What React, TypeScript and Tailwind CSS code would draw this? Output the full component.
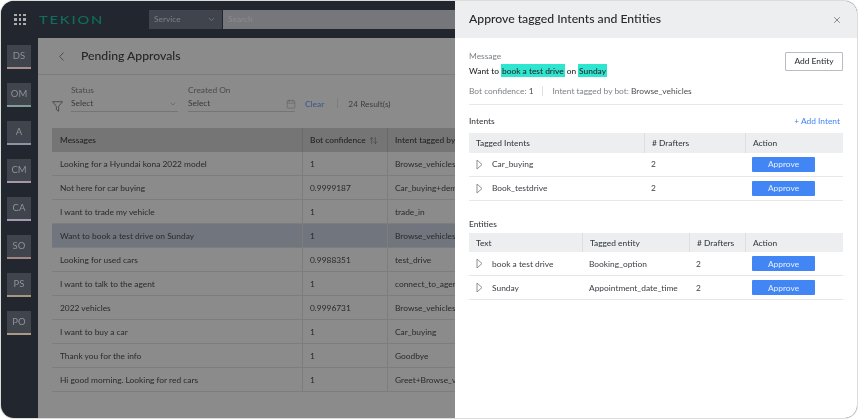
import React from "react";
import { ChevronDown, ChevronLeft, Calendar, X, ArrowUpDown } from "lucide-react";

const rail = [
  ["DS", "bg-[#a98e8c]"],
  ["OM", "bg-[#7f9c97]"],
  ["A", "bg-[#8b93a5]"],
  ["CM", "bg-[#a596a8]"],
  ["CA", "bg-[#a598b0]"],
  ["SO", "bg-[#a3857f]"],
  ["PS", "bg-[#a8977f]"],
  ["PO", "bg-[#ab9a83]"],
];

const rows = [
  ["Looking for a Hyundai kona 2022 model", "1", "Browse_vehicles"],
  ["Not here for car buying", "0.9999187", "Car_buying+demo"],
  ["I want to trade my vehicle", "1", "trade_in"],
  ["Want to book a test drive on Sunday", "1", "Browse_vehicles"],
  ["Looking for used cars", "0.9988351", "test_drive"],
  ["I want to talk to the agent", "1", "connect_to_agent"],
  ["2022 vehicles", "0.9996731", "Browse_vehicles"],
  ["I want to buy a car", "1", "Car_buying"],
  ["Thank you for the info", "1", "Goodbye"],
  ["Hi good morning. Looking for red cars", "1", "Greet+Browse_vehicles"],
];

function Tri() {
  return (
    <svg width="7" height="11" viewBox="0 0 7 11" fill="none" className="shrink-0">
      <path d="M1 1 L6 5.5 L1 10 Z" stroke="#8b8f96" strokeWidth="1" strokeLinejoin="round" />
    </svg>
  );
}

function FunnelIcon() {
  return (
    <svg width="11" height="11" viewBox="0 0 11 11" fill="none">
      <path d="M0.5 0.7 H10.5 L6.6 5.4 V10.3 L4.4 8.6 V5.4 Z" stroke="#3f3f3f" strokeWidth="0.8" strokeLinejoin="round" />
    </svg>
  );
}

function Approve() {
  return (
    <div className="flex h-[15px] w-[63px] items-center justify-center rounded-[1px] bg-[#4285f4] text-[#e8f0fe]">
      Approve
    </div>
  );
}

export default function App() {
  return (
    <div
      className="h-[420px] w-[859px] overflow-hidden bg-white p-[1px] text-[8.4px] leading-none blur-[0.35px]"
      style={{ fontFamily: 'Lato, "Liberation Sans", sans-serif' }}
    >
      <div className="relative flex h-[417px] w-[856px] flex-col overflow-hidden rounded-[13px] bg-[#22262f] shadow-[0_0_0_1px_#dcdcdc]">
        <div className="flex h-[37px] shrink-0 items-center bg-[#22262f] pl-[13px]">
          <div className="grid w-[12px] grid-cols-3 gap-[2px]">
            {Array.from({ length: 9 }).map((_, i) => (
              <span key={i} className="h-[2.5px] w-[2.5px] bg-[#a9abae]" />
            ))}
          </div>
          <div className="ml-[13px] w-[72px] origin-left scale-x-[1.22] whitespace-nowrap text-[12px] font-medium tracking-[1.5px] text-[#0f6f5c]">TEKION</div>
          <div className="ml-[38px] flex h-[19px] w-[73px] items-center justify-between bg-[#3f444d] pl-[5px] pr-[6px] text-[#7d8187]">
            <span>Service</span>
            <ChevronDown size={9} />
          </div>
          <div className="ml-[1px] flex h-[19px] w-[234px] items-center bg-[#75777a] pl-[5px] text-[#8b8c8e]">Search</div>
        </div>
        <div className="flex min-h-0 flex-1">
          <div className="flex w-[37px] shrink-0 flex-col items-center gap-[14px] pr-[1px] pt-[7px]">
            {rail.map(([t, c]) => (
              <div key={t} className="flex h-[24px] w-[24px] flex-col bg-[#3f444d] text-[#8f9297]">
                <div className="flex flex-1 items-center justify-center text-[9.5px]">{t}</div>
                <div className={`h-[2px] ${c}`} />
              </div>
            ))}
          </div>
          <div className="min-w-0 flex-1 bg-[#8b8b8b] text-[#2e2e2e]">
            <div className="flex h-[37px] items-center border-b border-[#7d7d7d] pl-[16px]">
              <ChevronLeft size={15} className="text-[#3a3a3a]" strokeWidth={1.2} />
              <div className="ml-[12px] text-[12.2px] font-medium text-[#262626]">Pending Approvals</div>
            </div>
            <div className="flex h-[53px] pl-[14px] text-[#3a3a3a]">
              <div className="flex w-[19px] items-start pt-[26px]">
                <FunnelIcon />
              </div>
              <div className="mt-[11px] w-[107px]">
                <div className="mb-[5px] text-[#4a4a4a]">Status</div>
                <div className="flex h-[13px] items-start justify-between border-b border-[#757575]">
                  <span>Select</span>
                  <ChevronDown size={8} className="mr-[1px] mt-[1px] text-[#5a5a5a]" />
                </div>
              </div>
              <div className="ml-[10px] mt-[11px] w-[107px]">
                <div className="mb-[5px] text-[#4a4a4a]">Created On</div>
                <div className="flex h-[13px] items-start justify-between border-b border-[#757575]">
                  <span>Select</span>
                  <Calendar size={10} className="mr-[-1px] text-[#5a5a5a]" strokeWidth={1.2} />
                </div>
              </div>
              <div className="ml-[10px] mt-[25px] font-medium text-[#3b5b8c]">Clear</div>
              <div className="ml-[13px] mt-[23px] h-[10px] w-px bg-[#7d7d7d]" />
              <div className="ml-[10px] mt-[25px] text-[#3f3f3f]">24 Result(s)</div>
            </div>
            <div className="ml-[14px]">
              <div className="grid h-[24px] grid-cols-[250px_85px_1fr] bg-[#757575] font-medium text-[#242424]">
                <div className="flex items-center pl-[8px] pt-[1px]">Messages</div>
                <div className="flex items-center justify-between whitespace-nowrap border-l border-[#6a6a6a] pl-[7px] pr-[9px] pt-[1px]">
                  Bot confidence <ArrowUpDown size={9} className="text-[#4a4a4a]" />
                </div>
                <div className="flex items-center whitespace-nowrap border-l border-[#6a6a6a] pl-[7px] pt-[1px]">Intent tagged by bot</div>
              </div>
              {rows.map((r) => (
                <div
                  key={r[0]}
                  className={`grid h-[24px] grid-cols-[250px_85px_1fr] border-b border-[#7d7d7d] text-[#2a2a2a] ${r[0].startsWith("Want") ? "bg-[#70757e]" : ""}`}
                >
                  <div className="flex items-center pl-[8px] pt-[1px]">{r[0]}</div>
                  <div className="flex items-center border-l border-[#7d7d7d] pl-[7px] pt-[1px]">{r[1]}</div>
                  <div className="flex items-center whitespace-nowrap border-l border-[#7d7d7d] pl-[7px] pt-[1px]">{r[2]}</div>
                </div>
              ))}
            </div>
          </div>
        </div>

        <div className="absolute bottom-0 right-0 top-0 flex w-[402px] flex-col bg-white text-[#3b3e44]">
          <div className="flex h-[37px] shrink-0 items-center justify-between bg-[#eceef0] pl-[14px] pr-[15px]">
            <div className="text-[12.2px] font-medium text-[#26282c]">Approve tagged Intents and Entities</div>
            <X size={10} className="text-[#74787e]" />
          </div>
          <div className="px-[14px]">
            <div className="flex justify-between border-b border-[#e6e7e9] pb-[8px] pt-[14px]">
              <div>
                <div className="text-[#7d8187]">Message</div>
                <div className="mt-[4px] flex h-[13px] items-center font-medium text-[#26282c]">
                  Want to
                  <span className="mx-[2px] flex h-[13px] items-center bg-[#2ee6cf] px-[1px]">book a test drive</span>
                  on
                  <span className="ml-[2px] flex h-[13px] items-center bg-[#2ee6cf] px-[1px]">Sunday</span>
                </div>
                <div className="mt-[9px] flex items-center text-[#7d8187]">
                  Bot confidence:&nbsp;<span className="text-[#4a4d52]">1</span>
                  <span className="mx-[9px] h-[10px] w-px bg-[#dfe0e2]" />
                  Intent tagged by bot:&nbsp;<span className="text-[#4a4d52]">Browse_vehicles</span>
                </div>
              </div>
              <div className="flex h-[19px] w-[58px] items-center justify-center rounded-[1px] border border-[#b9bcc2] font-medium text-[#34373c]">
                Add Entity
              </div>
            </div>

            <div className="mt-[12px] flex items-center justify-between">
              <div className="font-medium text-[#3b3e44]">Intents</div>
              <div className="mr-[3px] text-[#4285f4]">+ Add Intent</div>
            </div>
            <div className="mt-[7px]">
              <div className="grid h-[20px] grid-cols-[175px_101px_1fr] bg-[#eceef0] font-medium text-[#3b3e44]">
                <div className="flex items-center pl-[7px]">Tagged Intents</div>
                <div className="flex items-center border-l border-[#dcdee1] pl-[7px]"># Drafters</div>
                <div className="flex items-center border-l border-[#dcdee1] pl-[7px]">Action</div>
              </div>
              {[["Car_buying", "2"], ["Book_testdrive", "2"]].map((r) => (
                <div key={r[0]} className="grid h-[24px] grid-cols-[175px_101px_1fr] border-b border-[#e6e7e9]">
                  <div className="flex items-center gap-[9px] pl-[7px]"><Tri />{r[0]}</div>
                  <div className="flex items-center pl-[7px]">{r[1]}</div>
                  <div className="flex items-center pl-[7px]"><Approve /></div>
                </div>
              ))}
            </div>

            <div className="mt-[19px] font-medium text-[#3b3e44]">Entities</div>
            <div className="mt-[5px]">
              <div className="grid h-[19px] grid-cols-[113px_107px_56px_1fr] bg-[#eceef0] font-medium text-[#3b3e44]">
                <div className="flex items-center pl-[7px]">Text</div>
                <div className="flex items-center border-l border-[#dcdee1] pl-[7px]">Tagged entity</div>
                <div className="flex items-center whitespace-nowrap border-l border-[#dcdee1] pl-[7px]"># Drafters</div>
                <div className="flex items-center border-l border-[#dcdee1] pl-[7px]">Action</div>
              </div>
              {[["book a test drive", "Booking_option"], ["Sunday", "Appointment_date_time"]].map((r) => (
                <div key={r[0]} className="grid h-[24px] grid-cols-[113px_107px_56px_1fr] border-b border-[#e6e7e9]">
                  <div className="flex items-center gap-[9px] whitespace-nowrap pl-[7px]"><Tri />{r[0]}</div>
                  <div className="flex items-center whitespace-nowrap pl-[7px]">{r[1]}</div>
                  <div className="flex items-center pl-[7px]">2</div>
                  <div className="flex items-center pl-[7px]"><Approve /></div>
                </div>
              ))}
            </div>
          </div>
        </div>
      </div>
    </div>
  );
}
